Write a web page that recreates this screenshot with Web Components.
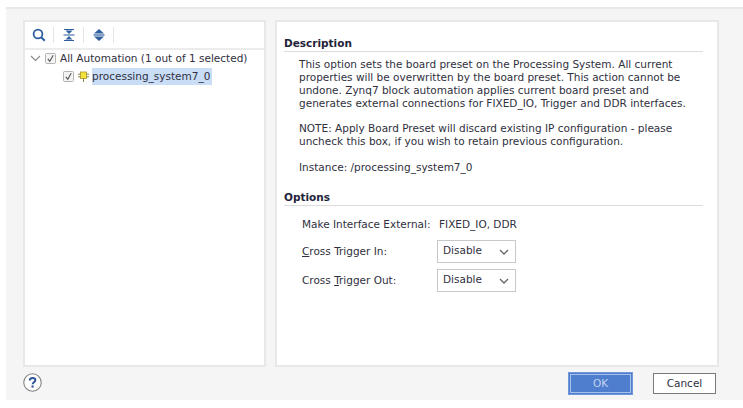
<!DOCTYPE html>
<html>
<head>
<meta charset="utf-8">
<style>
  html, body { margin: 0; padding: 0; background: #fff; }
  body { font: 10.5px "DejaVu Sans", sans-serif; color: #303040; height: 408px; overflow: hidden; }
</style>
</head>
<body>
<automation-dialog>
  <tree-panel slot="left"></tree-panel>
  <detail-panel slot="right"></detail-panel>
</automation-dialog>
<script>
class AutomationDialog extends HTMLElement {
  constructor() {
    super();
    this.shadowDOM = this.attachShadow({mode: 'open'});
    this.shadowDOM.innerHTML = `
      <style>
        :host {
          display: flex;
          flex-direction: column;
          box-sizing: border-box;
          height: 393px;
          margin: 7px 0 0 6px;
          background: #f5f5f5;
          border-top: 2px solid #e8e8e8;
        }
        .panes {
          display: flex;
          gap: 9px;
          padding: 11px 0 0 17px;
          height: 346px;
          box-sizing: content-box;
        }
        .foot {
          display: flex;
          align-items: center;
          padding: 0 27px 0 17px;
          height: 24px;
          margin-top: 5px;
        }
        .help { flex: none; width: 19px; height: 19px; margin-top: -2px; }
        .grow { flex: 1; }
        .btn {
          box-sizing: border-box;
          width: 63px;
          height: 21px;
          display: flex;
          align-items: center;
          justify-content: center;
          background: #fff;
          border: 1px solid #7a7a7a;
          color: #303040;
        }
        .ok {
          background: #4f7ecf;
          color: #c3d3ee;
          border: 1px solid #4f7ecf;
          outline: 1px solid #6f97dd;
          box-shadow: inset 0 0 0 1px #a9c1ea;
          margin-right: 21px;
        }
      </style>
      <div class="panes"><slot name="left"></slot><slot name="right"></slot></div>
      <div class="foot">
        <svg class="help" viewBox="0 0 18 18">
          <circle cx="9" cy="9" r="8.3" fill="#fff" stroke="#808080" stroke-width="1"/>
          <path d="M6.4 7.2c0-1.6 1.2-2.5 2.7-2.5s2.6.9 2.6 2.2c0 1.9-2.5 1.9-2.5 3.7" fill="none" stroke="#2f5597" stroke-width="1.9"/>
          <rect x="8.1" y="11.8" width="2" height="2" fill="#2f5597"/>
        </svg>
        <div class="grow"></div>
        <div class="btn ok">OK</div>
        <div class="btn">Cancel</div>
      </div>
    `;
  }
}

class TreePanel extends HTMLElement {
  constructor() {
    super();
    this.shadowDOM = this.attachShadow({mode: 'open'});
    this.shadowDOM.innerHTML = `
      <style>
        :host {
          display: block;
          box-sizing: border-box;
          width: 243px;
          height: 347px;
          background: #fff;
          border: 2px solid #e8e8e8;
        }
        .tools {
          display: flex;
          align-items: center;
          height: 26px;
          border-bottom: 2px solid #ececec;
          padding-left: 7px;
        }
        .tools svg { width: 14px; height: 14px; flex: none; }
        .sep { width: 1px; height: 16px; background: #e4e4e4; margin: 0 8px 0 7px; }
        .row { display: flex; align-items: center; white-space: nowrap; }
        .row.top { height: 18px; padding: 0 0 2px 5px; box-sizing: border-box; }
        .row.sub { height: 17px; padding-left: 38px; }
        .arrow { width: 11px; height: 7px; flex: none; margin-right: 4px; }
        .check { width: 11px; height: 11px; flex: none; margin-right: 4px; }
        .chip { width: 11px; height: 11px; flex: none; margin-right: 3px; }
        .sel { background: #c9ddf7; height: 17px; line-height: 17px; padding-right: 2px; }
      </style>
      <div class="tools">
        <svg viewBox="0 0 14 14"><circle cx="6" cy="6" r="4.4" fill="none" stroke="#2f5f9e" stroke-width="1.8"/><path d="M9.2 9.2l3.6 3.6" stroke="#2f5f9e" stroke-width="2"/></svg>
        <div class="sep"></div>
        <svg viewBox="0 0 14 14"><path d="M2 1.5h10M2 12.5h10M1.5 7h11" stroke="#2f5f9e" stroke-width="1.2"/><path d="M3.5 2.5h7L7 6zM3.5 11.5h7L7 8z" fill="#2f5f9e"/></svg>
        <div class="sep"></div>
        <svg viewBox="0 0 14 14"><path d="M7 1l5 4.6H2zM7 13l5-4.6H2z" fill="#2f5f9e"/><path d="M1.5 7h11" stroke="#2f5f9e" stroke-width="1.2"/></svg>
        <div class="sep"></div>
      </div>
      <div class="row top">
        <svg class="arrow" viewBox="0 0 11 7"><path d="M1 1l4.5 4.5L10 1" fill="none" stroke="#8a8a8a" stroke-width="1.1"/></svg>
        <svg class="check" viewBox="0 0 11 11"><rect x=".5" y=".5" width="10" height="10" rx="1" fill="#f4f4f4" stroke="#b4b4b4"/><path d="M2.8 5.8l2 2.4 3.4-6" fill="none" stroke="#555" stroke-width="1.1"/></svg>
        <span>All Automation (1 out of 1 selected)</span>
      </div>
      <div class="row sub">
        <svg class="check" viewBox="0 0 11 11"><rect x=".5" y=".5" width="10" height="10" rx="1" fill="#f4f4f4" stroke="#b4b4b4"/><path d="M2.8 5.8l2 2.4 3.4-6" fill="none" stroke="#555" stroke-width="1.1"/></svg>
        <svg class="chip" viewBox="0 0 11 11"><path d="M0 3.2h11M0 5.8h11M5.5 7v4" stroke="#8a7f4a" stroke-width="1"/><rect x="2.5" y="1" width="6" height="6.5" fill="#f4e23a" stroke="#a8962a" stroke-width=".8"/></svg>
        <span class="sel">processing_system7_0</span>
      </div>
    `;
  }
}

class SectionHead extends HTMLElement {
  constructor() {
    super();
    this.shadowDOM = this.attachShadow({mode: 'open'});
    this.shadowDOM.innerHTML = `
      <style>
        :host {
          display: block;
          font-weight: bold;
          height: 14px;
          line-height: 14px;
          padding-bottom: 1px;
          border-bottom: 1px solid #dcdcdc;
          color: #23233a;
        }
      </style>
      <slot></slot>
    `;
  }
}

class DetailPanel extends HTMLElement {
  constructor() {
    super();
    this.shadowDOM = this.attachShadow({mode: 'open'});
    this.shadowDOM.innerHTML = `
      <style>
        :host {
          display: block;
          box-sizing: border-box;
          width: 444px;
          height: 347px;
          background: #fff;
          border: 2px solid #e8e8e8;
          padding: 14px 14px 0 7px;
        }
        .text { margin: 6px 0 0 15px; line-height: 12.85px; white-space: nowrap; }
        .text p { margin: 0 0 13px; }
        .opts { margin-top: 16px; }
        .grid {
          display: grid;
          grid-template-columns: 135px auto;
          justify-content: start;
          align-items: center;
          margin: 11px 0 0 18px;
          row-gap: 6px;
        }
        .grid > .label, .grid > .val { height: 14px; line-height: 14px; }
        .val { margin-left: 2px; }
        .first { margin-bottom: 3px; }
        u { text-underline-offset: 1px; }
        .select {
          box-sizing: border-box;
          width: 79px;
          height: 23px;
          background: #fff;
          border: 1px solid #c8c8c8;
          display: flex;
          align-items: center;
          justify-content: space-between;
          padding: 0 6px 2px 5px;
        }
        .select svg { width: 10px; height: 6px; margin-top: 3px; }
      </style>
      <section-head>Description</section-head>
      <div class="text">
        <p>This option sets the board preset on the Processing System. All current<br>properties will be overwritten by the board preset. This action cannot be<br>undone. Zynq7 block automation applies current board preset and<br>generates external connections for FIXED_IO, Trigger and DDR interfaces.</p>
        <p>NOTE: Apply Board Preset will discard existing IP configuration - please<br>uncheck this box, if you wish to retain previous configuration.</p>
        <p>Instance: /processing_system7_0</p>
      </div>
      <section-head class="opts">Options</section-head>
      <div class="grid">
        <div class="label first">Make Interface External:</div><div class="val first">FIXED_IO, DDR</div>
        <div class="label"><u>C</u>ross Trigger In:</div>
        <div class="select">Disable<svg viewBox="0 0 10 6"><path d="M1 1l4 4 4-4" fill="none" stroke="#666" stroke-width="1.3"/></svg></div>
        <div class="label">Cross <u>T</u>rigger Out:</div>
        <div class="select">Disable<svg viewBox="0 0 10 6"><path d="M1 1l4 4 4-4" fill="none" stroke="#666" stroke-width="1.3"/></svg></div>
      </div>
    `;
  }
}

customElements.define('section-head', SectionHead);
customElements.define('tree-panel', TreePanel);
customElements.define('detail-panel', DetailPanel);
customElements.define('automation-dialog', AutomationDialog);
</script>
</body>
</html>
